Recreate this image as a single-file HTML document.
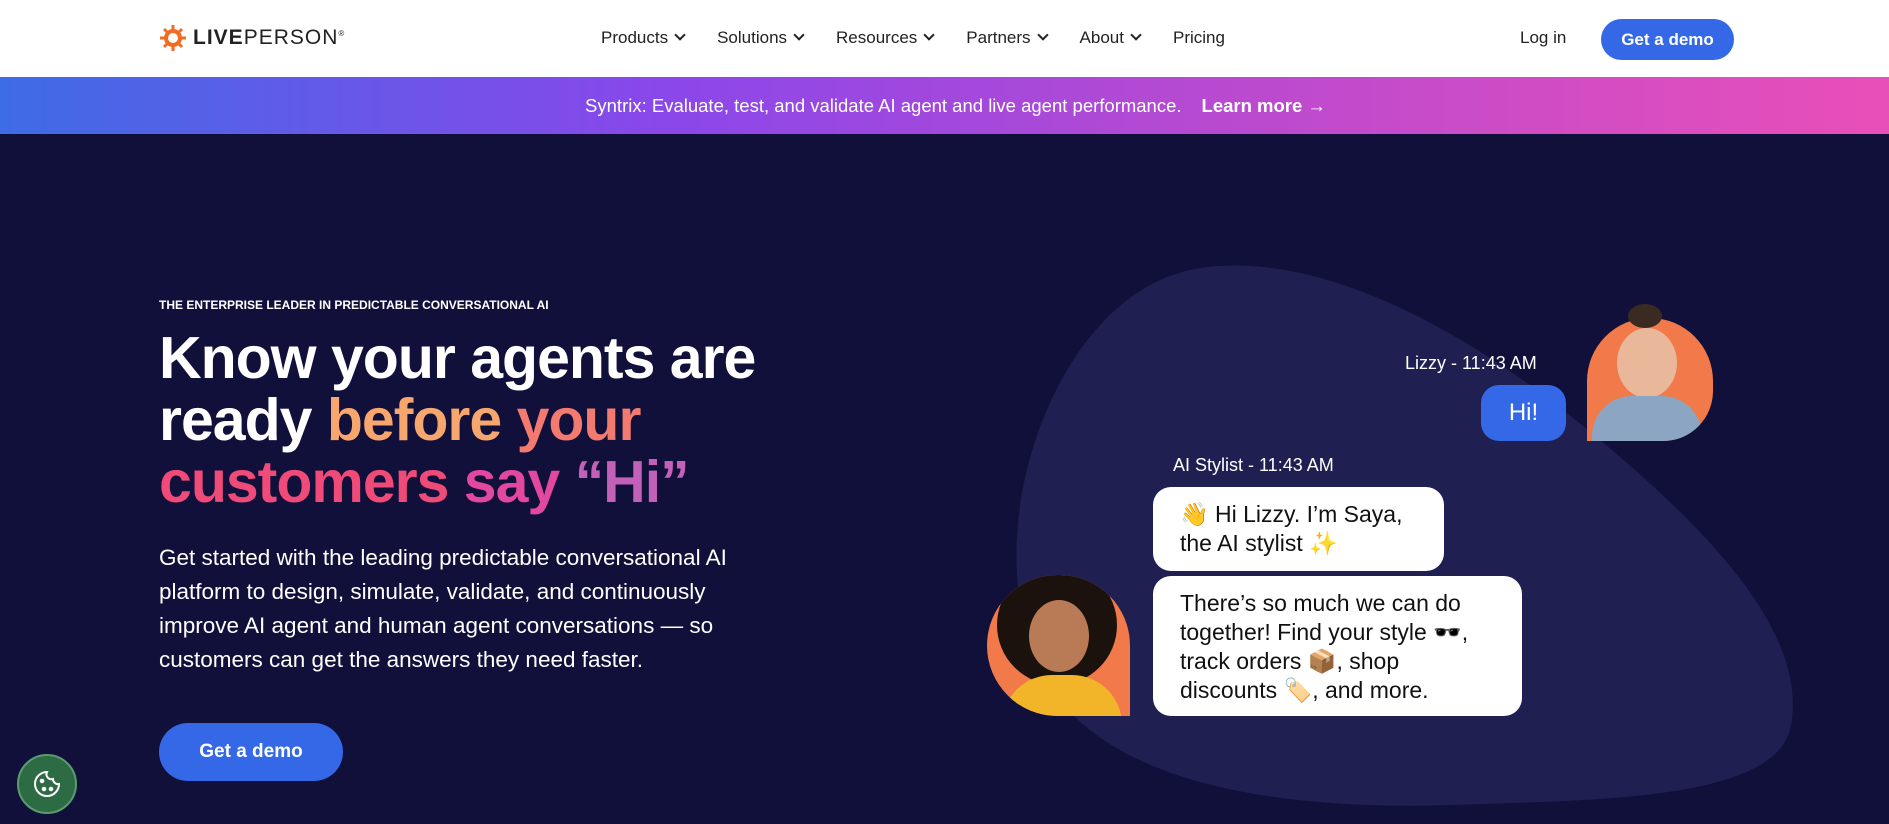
<!DOCTYPE html>
<html><head><meta charset="utf-8"><style>
*{margin:0;padding:0;box-sizing:border-box}
body{width:1889px;height:824px;overflow:hidden;font-family:"Liberation Sans",sans-serif;background:#11103b;position:relative}
.nav{position:absolute;top:0;left:0;width:1889px;height:77px;background:#fff}
.logo{position:absolute;left:159px;top:24px;display:flex;align-items:center;gap:6px;font-size:21px;letter-spacing:1px;color:#222}
.menu{position:absolute;left:601px;top:28px;display:flex;gap:33px;font-size:17px;color:#222}
.menu span::after{content:"";display:inline-block;width:6px;height:6px;border-right:2px solid #222;border-bottom:2px solid #222;transform:rotate(45deg);margin-left:8px;position:relative;top:-4px}
.menu span.np::after{display:none}
.login{position:absolute;left:1520px;top:28px;font-size:17px;color:#222}
.btn{position:absolute;background:#3468e6;color:#fff;font-weight:bold;border-radius:30px;display:flex;align-items:center;justify-content:center}
.banner{position:absolute;top:77px;left:0;width:1889px;height:57px;background:linear-gradient(90deg,#3e6be6 0%,#8a47ea 35%,#b94ad0 65%,#e94fb8 100%);color:#fff;font-size:18.5px;display:flex;align-items:center;justify-content:center;padding-left:22px}
.hero{position:absolute;color:#fff}
.h1{position:absolute;left:159px;top:327px;font-size:59px;font-weight:bold;line-height:62px;color:#fff;letter-spacing:-1px}
.p{position:absolute;left:159px;top:541px;font-size:22.5px;line-height:34px;color:#fff;width:600px}
.meta{position:absolute;color:#fff;font-size:18px}
.bub{position:absolute;background:#fff;color:#111;font-size:23px;line-height:29px;border-radius:18px;padding:13px 27px}
</style></head><body>
<div class="nav">
 <div class="logo"><svg width="28" height="28" viewBox="0 0 28 28"><g fill="#f26b22"><circle cx="14" cy="14" r="9"/><g stroke="#f26b22" stroke-width="3"><line x1="14" y1="1" x2="14" y2="27"/><line x1="1" y1="14" x2="27" y2="14"/><line x1="5" y1="5" x2="23" y2="23"/><line x1="23" y1="5" x2="5" y2="23"/></g></g><circle cx="14" cy="14" r="5" fill="#fff"/></svg><span><b>LIVE</b>PERSON<sup style="font-size:8px">®</sup></span></div>
 <div class="menu"><span>Products</span><span>Solutions</span><span>Resources</span><span>Partners</span><span>About</span><span class="np">Pricing</span></div>
 <div class="login">Log in</div>
 <div class="btn" style="left:1601px;top:19px;width:133px;height:41px;font-size:17px">Get a demo</div>
</div>
<div class="banner">Syntrix: Evaluate, test, and validate AI agent and live agent performance.<b style="margin-left:20px">Learn more →</b></div>
<svg style="position:absolute;left:0;top:0" width="1889" height="824"><path d="M1200 268 C1320 250 1470 330 1600 440 C1720 540 1810 640 1790 730 C1770 800 1600 800 1450 805 C1300 810 1130 790 1060 700 C990 610 1010 450 1080 350 C1120 295 1160 275 1200 268Z" fill="#201f52"/></svg>
<div class="hero" style="left:159px;top:298px;font-size:12px;font-weight:bold">THE ENTERPRISE LEADER IN PREDICTABLE CONVERSATIONAL AI</div>
<div class="h1">Know your agents are<br>ready <span style="color:#f7a66d">before </span><span style="color:#f27a6e">your</span><br><span style="color:#ef4a78">customers </span><span style="color:#e2489f">say </span><span style="color:#c360b7">“Hi”</span></div>
<div class="p">Get started with the leading predictable conversational AI platform to design, simulate, validate, and continuously improve AI agent and human agent conversations — so customers can get the answers they need faster.</div>
<div class="btn" style="left:159px;top:723px;width:184px;height:58px;font-size:19px">Get a demo</div>
<div class="meta" style="left:1405px;top:353px">Lizzy - 11:43 AM</div>
<div style="position:absolute;left:1481px;top:385px;width:85px;height:56px;border-radius:18px;background:#3468e6;color:#fff;font-size:24px;display:flex;align-items:center;justify-content:center">Hi!</div>
<div style="position:absolute;left:1587px;top:318px;width:126px;height:123px;border-radius:63px 63px 50px 0;background:#f2794a;overflow:hidden"><div style="position:absolute;left:30px;top:10px;width:60px;height:70px;border-radius:50%;background:#e9b79a"></div><div style="position:absolute;left:5px;top:78px;width:110px;height:60px;border-radius:40px 40px 0 0;background:#8ba5c3"></div></div>
<div style="position:absolute;left:1628px;top:304px;width:34px;height:24px;border-radius:50%;background:#3a2a22"></div>
<div class="meta" style="left:1173px;top:455px">AI Stylist - 11:43 AM</div>
<div class="bub" style="left:1153px;top:487px;width:291px;height:84px">👋 Hi Lizzy. I’m Saya, the AI stylist ✨</div>
<div class="bub" style="left:1153px;top:576px;width:369px;height:140px">There’s so much we can do together! Find your style 🕶️, track orders 📦, shop discounts 🏷️, and more.</div>
<div style="position:absolute;left:987px;top:575px;width:143px;height:141px;border-radius:72px 72px 0 72px;background:#f2794a;overflow:hidden"><div style="position:absolute;left:10px;top:-10px;width:120px;height:120px;border-radius:50%;background:#1b120e"></div><div style="position:absolute;left:42px;top:25px;width:60px;height:72px;border-radius:50%;background:#b97a56"></div><div style="position:absolute;left:15px;top:100px;width:120px;height:60px;border-radius:50px 50px 0 0;background:#f2b52a"></div></div>
<div style="position:absolute;left:17px;top:754px;width:60px;height:60px;border-radius:50%;background:#2c6b43;border:2px solid #5a9c6e;display:flex;align-items:center;justify-content:center"><svg width="30" height="30" viewBox="0 0 30 30" fill="none" stroke="#fff" stroke-width="2"><path d="M15 3 A12 12 0 1 0 27 15 A5 5 0 0 1 21 10 A5 5 0 0 1 15 3Z"/><circle cx="10" cy="12" r="1.3" fill="#fff"/><circle cx="12" cy="20" r="1.3" fill="#fff"/><circle cx="19" cy="20" r="1.3" fill="#fff"/></svg></div>
</body></html>
